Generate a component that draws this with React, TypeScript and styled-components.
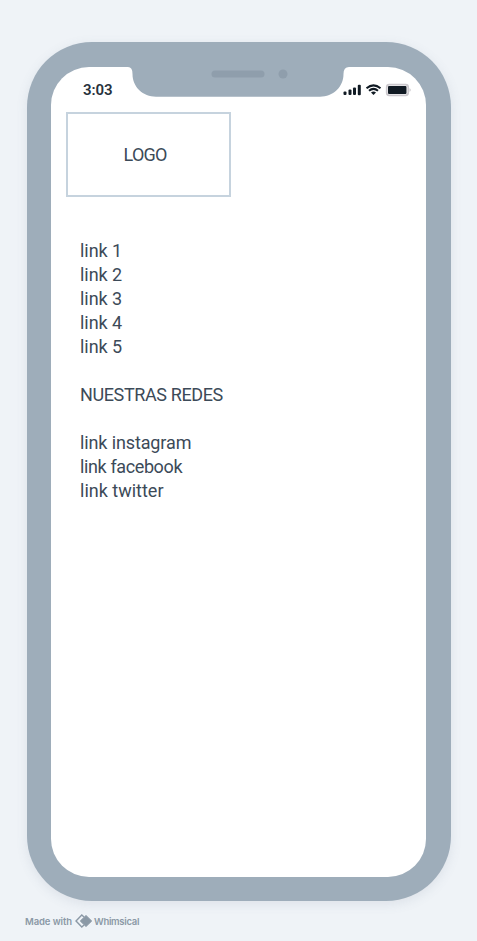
import React from "react";
import styled, { createGlobalStyle } from "styled-components";

const GlobalStyle = createGlobalStyle`
  * { box-sizing: border-box; }
  body { margin: 0; background: #eff3f7; }
`;

const Page = styled.main`
  min-height: 941px;
  width: 477px;
  padding: 42.2px 26px 0 26.5px;
  background: #eff3f7;
  font-family: Roboto, "Liberation Sans", sans-serif;
  color: #3c4a58;
`;

const Phone = styled.section`
  width: 424px;
  height: 859.2px;
  padding: 24.5px 24.5px 24px 24.5px;
  border-radius: 65px;
  background: #9eadba;
  box-shadow: 0 3px 12px rgba(90, 110, 130, 0.12);
`;

const Screen = styled.div`
  height: 810.6px;
  border-radius: 38px;
  background: #fff;
  overflow: hidden;
`;

const StatusBar = styled.header`
  display: flex;
  height: 45.6px;
  align-items: flex-start;
`;

const Clock = styled.time`
  width: 77px;
  padding: 13.5px 0 0 32px;
  font-size: 15px;
  line-height: 20px;
  font-weight: 600;
  letter-spacing: -0.05px;
  color: #28323d;
`;

const Notch = styled.svg`
  flex: none;
  display: block;
`;

const StatusIcons = styled.svg`
  flex: none;
  display: block;
  margin: 14px 0 0 -6px;
`;

const Logo = styled.div`
  display: flex;
  align-items: center;
  justify-content: center;
  width: 165.4px;
  height: 85px;
  margin-left: 14.6px;
  padding-right: 6.5px;
  border: 2px solid #c6d3de;
`;

const Menu = styled.nav`
  display: flex;
  flex-direction: column;
  gap: 24px;
  padding: 41.7px 0 0 29px;
`;

const LinkList = styled.ul`
  margin: 0;
  padding: 0;
  list-style: none;
`;

const Label = styled.span<{ $spacing?: number }>`
  display: block;
  font-size: 18px;
  font-weight: 400;
  line-height: 24px;
  white-space: nowrap;
  letter-spacing: ${({ $spacing = 0 }) => $spacing}px;
`;

const Credit = styled.footer`
  display: flex;
  align-items: center;
  height: 16px;
  margin: 12px 0 0 -1.5px;
  font-family: Inter, sans-serif;
  font-size: 9.5px;
  color: #8b99a6;
`;

const CreditText = styled.span<{ $width: number; $spacing: number }>`
  width: ${({ $width }) => $width}px;
  font-weight: 600;
  letter-spacing: ${({ $spacing }) => $spacing}px;
  white-space: nowrap;
`;

const Mark = styled.svg`
  flex: none;
  margin-right: 1px;
`;

const pages = [1, 2, 3, 4, 5];
const networks = [
  { name: "instagram", spacing: -0.12 },
  { name: "facebook", spacing: -0.38 },
  { name: "twitter", spacing: 0 },
];

export default function App() {
  return (
    <Page>
      <GlobalStyle />
      <Phone>
        <Screen>
          <StatusBar>
            <Clock>3:03</Clock>
            <Notch width="221" height="31" viewBox="0 0 221 31">
              <path
                d="M0 0H221Q215.500 0 215.500 7C215.500 20 205 29.700 192 29.700H28C15 29.700 4.500 20 4.500 7Q4.500 0 0 0Z"
                fill="#9eadba"
              />
              <rect x="83.500" y="3.500" width="53" height="7" rx="3.500" fill="#8f9eac" />
              <circle cx="155" cy="7" r="4.500" fill="#8f9eac" />
            </Notch>
            <StatusIcons width="70" height="18" viewBox="0 0 70 18">
              <g fill="#101a23">
                <rect x="0.500" y="10.500" width="3" height="3.500" rx="1" />
                <rect x="5.500" y="8.500" width="3" height="5.500" rx="1" />
                <rect x="10" y="6.500" width="3" height="7.500" rx="1" />
                <rect x="14.800" y="3.800" width="3" height="10.500" rx="1" />
                <path d="M28 11.500Q30.500 9.500 33 11.500L30.500 14Z" />
                <rect x="45" y="5" width="18.500" height="8" rx="1" />
              </g>
              <g fill="none" stroke="#101a23" strokeWidth="2">
                <path d="M23.500 7.300Q30.500 1.500 37.500 7.300" />
                <path d="M26 9.700Q30.500 6 35 9.700" />
              </g>
              <rect x="43.700" y="3.700" width="21.500" height="10.600" rx="2.500" fill="none" stroke="#cbc8cd" strokeWidth="1.700" />
              <path d="M66.500 7Q69 9 66.500 11Z" fill="#cbc8cd" />
            </StatusIcons>
          </StatusBar>
          <Logo>
            <Label $spacing={-0.8}>LOGO</Label>
          </Logo>
          <Menu>
            <LinkList>
              {pages.map((n) => (
                <li key={n}>
                  <Label $spacing={-0.05}>link {n}</Label>
                </li>
              ))}
            </LinkList>
            <Label $spacing={-0.38}>NUESTRAS REDES</Label>
            <LinkList>
              {networks.map(({ name, spacing }) => (
                <li key={name}>
                  <Label $spacing={spacing}>link {name}</Label>
                </li>
              ))}
            </LinkList>
          </Menu>
        </Screen>
      </Phone>
      <Credit>
        <CreditText $width={50} $spacing={-0.1}>Made with</CreditText>
        <Mark width="18" height="14" viewBox="0 0 18 14">
          <path d="M9 3L6.800 1L1 7L6.800 13L9 11" fill="none" stroke="#8b99a6" strokeWidth="1.400" />
          <path d="M11 1.500L16.700 7L11 12.500L5.300 7Z" fill="#8b99a6" stroke="#8b99a6" strokeWidth="1" strokeLinejoin="round" />
        </Mark>
        <CreditText $width={46} $spacing={-0.3}>Whimsical</CreditText>
      </Credit>
    </Page>
  );
}
